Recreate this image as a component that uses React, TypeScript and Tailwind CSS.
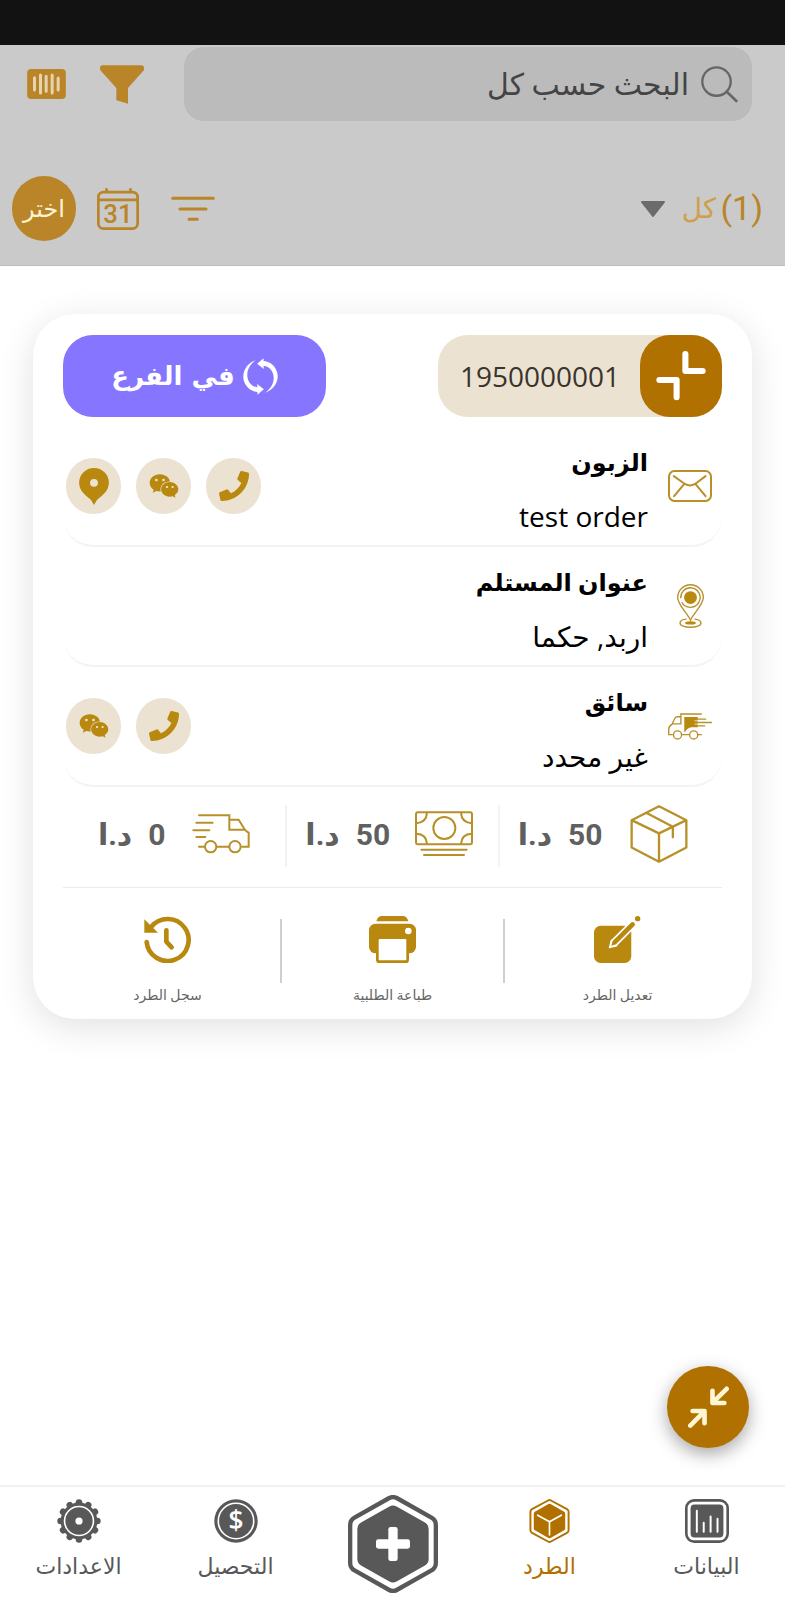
import React, { useState } from 'react';
import { FaPhone, FaWeixin } from 'react-icons/fa';

const SearchIcon = () => (
    <svg viewBox="0 0 112 112" className="w-[37px] h-[37px] shrink-0" fill="none" stroke="#666" strokeWidth="7" strokeLinecap="round">
        <circle cx="47" cy="47" r="43" />
        <path d="M78 78 L107 106" strokeWidth="8" />
    </svg>
);

const FunnelIcon = () => (
    <svg viewBox="0 0 132 115" className="w-11 h-[39px]" fill="#b98528">
        <path d="M8 0 H124 Q132 0 132 8 V14 L84 68 V115 L49 105 V68 L1 15 Q0 12 0 8 Q0 0 8 0 Z" />
    </svg>
);

const BarcodeIcon = () => (
    <svg viewBox="0 0 116 90" className="w-[39px] h-[30px]">
        <rect width="116" height="90" rx="12" fill="#b98528" />
        <path d="M22 26 V63 M40 18 V72 M57 22 V67 M75 18 V72 M93 27 V63" stroke="#e6d3b0" strokeWidth="9" strokeLinecap="round" />
    </svg>
);

const CalendarIcon = () => (
    <svg viewBox="0 0 124 124" className="w-[42px] h-[42px]" fill="none" stroke="#b98528" strokeWidth="8" strokeLinecap="round">
        <rect x="4" y="12" width="116" height="108" rx="15" />
        <path d="M4 35 H120 M28 4 V12 M99 4 V12" />
        <text x="62" y="104" textAnchor="middle" fontSize="76" fontWeight="500" fontFamily="Roboto, sans-serif" fill="#b98528" stroke="none">31</text>
    </svg>
);

const SortIcon = () => (
    <svg viewBox="0 0 132 76" className="w-11 h-[26px]" stroke="#b98528" strokeWidth="9" strokeLinecap="round">
        <path d="M5 6 H127 M27 38 H105 M54 69 H79" />
    </svg>
);

const CollapseIcon = () => (
    <svg viewBox="0 0 148 148" className="w-[50px] h-[50px]" fill="none" stroke="#fff" strokeWidth="18" strokeLinecap="round" strokeLinejoin="round">
        <path d="M87 9 V59 H138" />
        <path d="M10 86 H61 V137" />
    </svg>
);

const CycleIcon = () => (
    <svg viewBox="0 0 104 110" className="w-[35px] h-[37px]" fill="#fff">
        <path d="M38 7 C8 16 -8 50 6 76 C14 92 28 100 43 101 L43 109 L62 93 L42 77 L43 87 C10 84 -2 34 38 7 Z" />
        <path transform="rotate(180 52 55)" d="M38 7 C8 16 -8 50 6 76 C14 92 28 100 43 101 L43 109 L62 93 L42 77 L43 87 C10 84 -2 34 38 7 Z" />
    </svg>
);

const PinIcon = () => (
    <svg viewBox="0 0 90 112" className="w-[30px] h-[37px]">
        <path fill="#b8880f" fillRule="evenodd" d="M45 0 A45 45 0 0 1 90 45 C90 72 66 86 54 97 L45 112 L36 97 C24 86 0 72 0 45 A45 45 0 0 1 45 0 Z M45 33 A12 12 0 1 0 45 57 A12 12 0 1 0 45 33 Z" />
    </svg>
);

const EnvelopeIcon = () => (
    <svg viewBox="0 0 130 94" className="w-11 h-8" fill="none" stroke="#b8902a" strokeWidth="6" strokeLinecap="round">
        <rect x="3" y="3" width="124" height="88" rx="16" />
        <path d="M17 18 L50 41 Q64 50 80 41 L111 18 M47 42 L18 77 M82 42 L111 77" />
    </svg>
);

const AddressIcon = () => (
    <svg viewBox="0 0 80 130" className="w-[27px] h-[44px]" fill="none" stroke="#b8902a" strokeWidth="4">
        <path d="M40 107 C34 90 2 62 2 40 A38 38 0 0 1 78 40 C78 62 46 90 40 107 Z" />
        <path d="M11 42 A29 29 0 0 1 40 11 A29 29 0 1 1 14 54" />
        <circle cx="40" cy="40" r="19" fill="#b8880f" stroke="none" />
        <path d="M28 104 C16 105 9 110 9 115 C9 123 23 128 40 128 C57 128 71 123 71 115 C71 110 64 105 52 104" />
        <ellipse cx="40" cy="115" rx="16" ry="5" fill="#b8880f" stroke="none" />
    </svg>
);

const DriverIcon = () => (
    <svg viewBox="0 0 130 80" className="w-11 h-[27px]" fill="none" stroke="#b8902a" strokeWidth="4">
        <path d="M100 3 H38 V32 H13 M38 11 H27 Q22 11 19 18 L12 33 Q2 40 2 48 V64 H14 M40 64 H62 M88 64 H100" />
        <path d="M48 12 H88 V42 H70 Q56 44 50 56 H48 Z" fill="#b8880f" stroke="none" />
        <path d="M84 18 H113 M88 28 H130 M84 38 H110" />
        <path d="M78 23 H102 M78 33 H102" stroke="#fff" strokeWidth="2" />
        <circle cx="28" cy="65" r="12" />
        <circle cx="76" cy="65" r="12" />
    </svg>
);

const BoxIcon = () => (
    <svg viewBox="0 0 174 176" className="w-[58px] h-[58px]" fill="none" stroke="#b8902a" strokeWidth="7" strokeLinejoin="round" strokeLinecap="round">
        <path d="M87 4 L170 46 V129 L87 172 L4 129 V46 Z M4 46 L87 86 L170 46 M87 86 V172 M51 25 L129 66 V98" />
    </svg>
);

const MoneyIcon = () => (
    <svg viewBox="0 0 174 136" className="w-[58px] h-[46px]" fill="none" stroke="#b8902a" strokeWidth="6" strokeLinecap="round">
        <rect x="3" y="3" width="168" height="96" rx="6" />
        <circle cx="88" cy="50" r="33" />
        <path d="M36 4 Q34 34 4 36 M138 4 Q140 34 170 36 M4 67 Q34 68 36 98 M170 67 Q140 68 138 98 M19 115 H155 M27 131 H147" />
    </svg>
);

const DeliveryIcon = () => (
    <svg viewBox="0 0 174 120" className="w-[58px] h-10" fill="none" stroke="#b8902a" strokeWidth="6" strokeLinecap="round">
        <path d="M21 4 H112 V47 H157 M112 17 H140 L156 43 Q158 48 170 56 V98 H150 M76 98 H110 M21 98 H37 M13 26 H62 M4 49 H52 M13 69 H40" />
        <circle cx="56" cy="98" r="17" />
        <circle cx="129" cy="98" r="17" />
    </svg>
);

const EditIcon = () => (
    <svg viewBox="0 0 140 140" className="w-[47px] h-[47px]" fill="none" strokeLinecap="round">
        <rect x="0" y="29" width="111" height="111" rx="20" fill="#b8880f" />
        <path d="M60 80 L118 22" stroke="#fff" strokeWidth="24" />
        <path d="M46 94 L52 72 L68 88 Z" fill="#fff" stroke="#fff" strokeWidth="4" strokeLinejoin="round" />
        <path d="M62 78 L115 25" stroke="#b8880f" strokeWidth="14" />
        <path d="M51 89 L57 73 L67 83 Z" fill="#b8880f" />
        <circle cx="130" cy="8" r="8" fill="#b8880f" />
    </svg>
);

const PrinterIcon = () => (
    <svg viewBox="0 0 141 141" className="w-[47px] h-[47px]" fill="#b8880f">
        <path d="M22 16 Q26 0 40 0 H101 Q114 0 118 16 Z" />
        <rect x="0" y="23" width="141" height="89" rx="20" />
        <rect x="21" y="62" width="99" height="79" rx="10" />
        <rect x="29" y="69" width="83" height="64" rx="3" fill="#fff" />
        <circle cx="118" cy="45" r="10" fill="#fff" />
    </svg>
);

const HistoryIcon = () => (
    <svg viewBox="0 0 141 141" className="w-[47px] h-[47px]" fill="none" stroke="#b8880f" strokeWidth="14" strokeLinecap="round" strokeLinejoin="round">
        <path d="M8 78 A63 63 0 1 0 22 32" />
        <path d="M1 10 V50 H42 Z" fill="#b8880f" stroke="none" />
        <path d="M67 43 V77 L83 94" />
    </svg>
);

const ShrinkIcon = () => (
    <svg viewBox="0 0 124 126" className="w-[41px] h-[42px]" fill="none" stroke="#fff6d2" strokeWidth="14" strokeLinecap="round" strokeLinejoin="round">
        <path d="M117 8 L76 48 M74 14 V51 H110" />
        <path d="M7 119 L48 78 M14 75 H50 V112" />
    </svg>
);

const DataIcon = () => (
    <svg viewBox="0 0 134 134" className="w-11 h-11" fill="none">
        <rect x="4" y="4" width="126" height="126" rx="24" stroke="#585858" strokeWidth="8" />
        <rect x="17" y="17" width="100" height="100" rx="12" fill="#585858" />
        <path d="M36 36 V100 M57 72 V100 M78 53 V100 M99 60 V100" stroke="#fff" strokeWidth="6" strokeLinecap="round" />
    </svg>
);

const ParcelIcon = () => (
    <svg viewBox="0 0 270 294" className="w-[41px] h-11" strokeLinejoin="round">
        <path d="M135 28 L242 86 V208 L135 266 L28 208 V86 Z" fill="#b07100" stroke="#b07100" strokeWidth="54" />
        <path d="M135 28 L242 86 V208 L135 266 L28 208 V86 Z" fill="#fff" stroke="#fff" strokeWidth="28" />
        <path d="M135 46 L226 97 V197 L135 248 L44 197 V97 Z" fill="#b07100" stroke="#b07100" strokeWidth="28" />
        <path d="M135 240 V152 L56 108 M135 152 L214 108" fill="none" stroke="#fff" strokeWidth="11" strokeLinecap="round" />
    </svg>
);

const AddIcon = () => (
    <svg viewBox="0 0 270 294" className="w-[90px] h-[98px]" strokeLinejoin="round">
        <path d="M135 32 L238 90 V204 L135 262 L32 204 V90 Z" fill="#585858" stroke="#585858" strokeWidth="64" />
        <path d="M135 32 L238 90 V204 L135 262 L32 204 V90 Z" fill="#fff" stroke="#fff" strokeWidth="38" />
        <path d="M135 54 L220 102 V192 L135 240 L50 192 V102 Z" fill="#585858" stroke="#585858" strokeWidth="44" />
        <rect x="121" y="96" width="28" height="102" rx="7" fill="#fff" />
        <rect x="84" y="133" width="102" height="28" rx="7" fill="#fff" />
    </svg>
);

const CollectIcon = () => (
    <svg viewBox="0 0 134 134" className="w-11 h-11">
        <circle cx="67" cy="67" r="66" fill="#585858" />
        <circle cx="67" cy="67" r="54" fill="none" stroke="#fff" strokeWidth="5" />
        <text x="67" y="95" textAnchor="middle" fontSize="80" fontWeight="600" fontFamily="Open Sans, sans-serif" fill="#fff">$</text>
    </svg>
);

const teeth = [0, 30, 60, 90, 120, 150, 180, 210, 240, 270, 300, 330];

const GearIcon = () => (
    <svg viewBox="0 0 134 134" className="w-11 h-11" fill="#585858">
        <circle cx="67" cy="67" r="56" />
        {teeth.map((angle) => (
            <circle key={angle} cx="67" cy="11" r="10" transform={`rotate(${angle} 67 67)`} />
        ))}
        <circle cx="67" cy="67" r="44" fill="none" stroke="#fff" strokeWidth="5" />
        <circle cx="67" cy="67" r="11" fill="#fff" />
    </svg>
);

interface ContactRowProps {
    icon: React.ReactNode;
    title: string;
    value: string;
    actions?: ('phone' | 'chat' | 'map')[];
}

const actionIcons = {
    phone: { label: 'اتصال', icon: <FaPhone className="w-[30px] h-[30px]" /> },
    chat: { label: 'محادثة', icon: <FaWeixin className="w-[30px] h-[30px]" /> },
    map: { label: 'الموقع', icon: <PinIcon /> },
};

const ContactRow: React.FC<ContactRowProps> = ({ icon, title, value, actions = [] }) => {
    return (
        <section className="flex items-center border-b-2 border-[#f3f3f3] rounded-b-[30px] h-[120px] pr-[10px] pl-[3px]">
            <div className="w-11 flex justify-center">{icon}</div>
            <div className="flex-1 pt-[6px] pr-5 font-['Open_Sans','DejaVu_Sans',sans-serif] leading-[54px] text-black">
                <h2 className="text-[24px] font-bold">{title}</h2>
                <p className="text-[28px]">{value}</p>
            </div>
            <div className="flex gap-[15px]">
                {actions.map((name) => (
                    <button
                        key={name}
                        aria-label={actionIcons[name].label}
                        className="w-[55px] h-14 rounded-full bg-[#ebe2d2] text-[#b8880f] flex justify-center items-center"
                    >
                        {actionIcons[name].icon}
                    </button>
                ))}
            </div>
        </section>
    );
};

const amountText = 'flex items-center gap-4 text-[30px] font-bold text-[#606060]';

const App: React.FC = () => {
    const [search, setSearch] = useState('');
    const [status, setStatus] = useState('all');

    return (
        <div dir="rtl" className="relative min-h-screen flex flex-col bg-white font-['Roboto','DejaVu_Sans',sans-serif]">
            <div className="h-[45px] bg-[#121212]" />
            <header className="bg-[#cacaca] border-b border-[#bcbcbc] pt-[2px] pb-6">
                <div className="flex items-center pr-[33px] pl-[27px]">
                    <label className="flex-1 min-w-0 h-[74px] rounded-[20px] bg-[#bbb] flex items-center gap-3 px-[14px]">
                        <SearchIcon />
                        <input
                            type="text"
                            aria-label="البحث"
                            value={search}
                            onChange={(e) => setSearch(e.target.value)}
                            placeholder="البحث حسب كل"
                            className="flex-1 min-w-0 h-full bg-transparent outline-none text-[30px] text-[#444] placeholder:text-[#444]"
                        />
                    </label>
                    <button aria-label="تصفية" className="mr-10">
                        <FunnelIcon />
                    </button>
                    <button aria-label="باركود" className="mr-[34px]">
                        <BarcodeIcon />
                    </button>
                </div>
                <div className="flex items-center mt-[55px] pr-[22px] pl-3">
                    <label htmlFor="status" className="text-[34px] text-[#b98528]">
                        <bdi>(1)</bdi>
                    </label>
                    <div className="flex items-center flex-1 pr-1">
                        <select
                            id="status"
                            value={status}
                            onChange={(e) => setStatus(e.target.value)}
                            className="appearance-none bg-transparent outline-none text-[28px] text-[#cf9f4d]"
                        >
                            <option value="all">كل</option>
                        </select>
                        <svg viewBox="0 0 24 16" className="w-6 h-4 mr-4 pointer-events-none" fill="#6b6b6b" stroke="#6b6b6b" strokeWidth="2" strokeLinejoin="round">
                            <path d="M1 1 H23 L12 15 Z" />
                        </svg>
                    </div>
                    <button aria-label="ترتيب">
                        <SortIcon />
                    </button>
                    <button aria-label="التاريخ" className="mr-8">
                        <CalendarIcon />
                    </button>
                    <button className="w-16 h-[65px] mr-[21px] rounded-full bg-[#b98528] text-[#fff3d6] text-[24px]">اختر</button>
                </div>
            </header>

            <main className="flex-1">
                <article className="mx-[33px] mt-12 rounded-[42px] bg-white shadow-[0_8px_36px_rgba(0,0,0,0.12)] pt-[21px] pb-3">
                    <div className="px-[30px]">
                        <div className="flex justify-between">
                            <div className="flex items-center rounded-[30px] bg-[#ebe2d2]">
                                <button
                                    aria-label="تصغير"
                                    className="w-[82px] h-[82px] rounded-[30px] bg-[#b07100] flex justify-center items-center"
                                >
                                    <CollapseIcon />
                                </button>
                                <span className="pr-5 pl-[22px] font-['Open_Sans',sans-serif] text-[28px] text-[#3b342c]">1950000001</span>
                            </div>
                            <button className="w-[263px] h-[82px] rounded-[30px] bg-[#8676ff] text-white flex justify-center items-center gap-2 font-['DejaVu_Sans',sans-serif] font-bold text-[26px]">
                                <CycleIcon />
                                في الفرع
                            </button>
                        </div>
                        <div className="mt-[10px]">
                            <ContactRow icon={<EnvelopeIcon />} title="الزبون" value="test order" actions={['phone', 'chat', 'map']} />
                            <ContactRow icon={<AddressIcon />} title="عنوان المستلم" value="اربد, حكما" />
                            <ContactRow icon={<DriverIcon />} title="سائق" value="غير محدد" actions={['phone', 'chat']} />
                        </div>
                        <div className="grid grid-cols-[222fr_214fr_222fr] pt-[18px] pb-5 border-b border-[#ebebeb]">
                            <div className="flex items-center justify-end gap-[27px] h-[62px] pb-1 pl-[18px]">
                                <BoxIcon />
                                <div className={amountText}>
                                    <span>50</span>
                                    <span>د.ا</span>
                                </div>
                            </div>
                            <div className="flex items-center justify-end gap-[25px] h-[62px] pb-1 pl-[18px] border-x-2 border-[#f3f3f3]">
                                <MoneyIcon />
                                <div className={amountText}>
                                    <span>50</span>
                                    <span>د.ا</span>
                                </div>
                            </div>
                            <div className="flex items-center justify-center gap-[27px] h-[62px] pb-1">
                                <DeliveryIcon />
                                <div className={amountText}>
                                    <span>0</span>
                                    <span>د.ا</span>
                                </div>
                            </div>
                        </div>
                    </div>
                    <div className="grid grid-cols-3 items-start px-[22px] pt-7 text-[14px] leading-6 text-[#666]">
                        <button className="flex flex-col items-center gap-5">
                            <EditIcon />
                            تعديل الطرد
                        </button>
                        <button className="flex flex-col items-center gap-5 relative">
                            <span className="absolute right-0 top-[3px] w-[2px] h-16 bg-[#cfcfcf]" />
                            <span className="absolute left-0 top-[3px] w-[2px] h-16 bg-[#cfcfcf]" />
                            <PrinterIcon />
                            طباعة الطلبية
                        </button>
                        <button className="flex flex-col items-center gap-5">
                            <HistoryIcon />
                            سجل الطرد
                        </button>
                    </div>
                </article>
            </main>

            <button
                aria-label="تصغير الكل"
                className="absolute right-9 bottom-[152px] w-[82px] h-[82px] rounded-full bg-[#b07100] shadow-[0_6px_18px_rgba(0,0,0,0.35)] flex justify-center items-center"
            >
                <ShrinkIcon />
            </button>

            <nav className="grid grid-cols-5 h-[115px] border-t-2 border-[#f1f1f1] text-[22px] leading-8 text-[#585858]">
                <a href="#data" className="flex flex-col items-center pt-3 gap-2">
                    <DataIcon />
                    البيانات
                </a>
                <a href="#parcels" className="flex flex-col items-center pt-3 gap-2 text-[#b07100]">
                    <ParcelIcon />
                    الطرد
                </a>
                <a href="#add" aria-label="اضافة" className="flex flex-col items-center pt-2">
                    <AddIcon />
                </a>
                <a href="#collection" className="flex flex-col items-center pt-3 gap-2">
                    <CollectIcon />
                    التحصيل
                </a>
                <a href="#settings" className="flex flex-col items-center pt-3 gap-2">
                    <GearIcon />
                    الاعدادات
                </a>
            </nav>
        </div>
    );
};

export default App;
